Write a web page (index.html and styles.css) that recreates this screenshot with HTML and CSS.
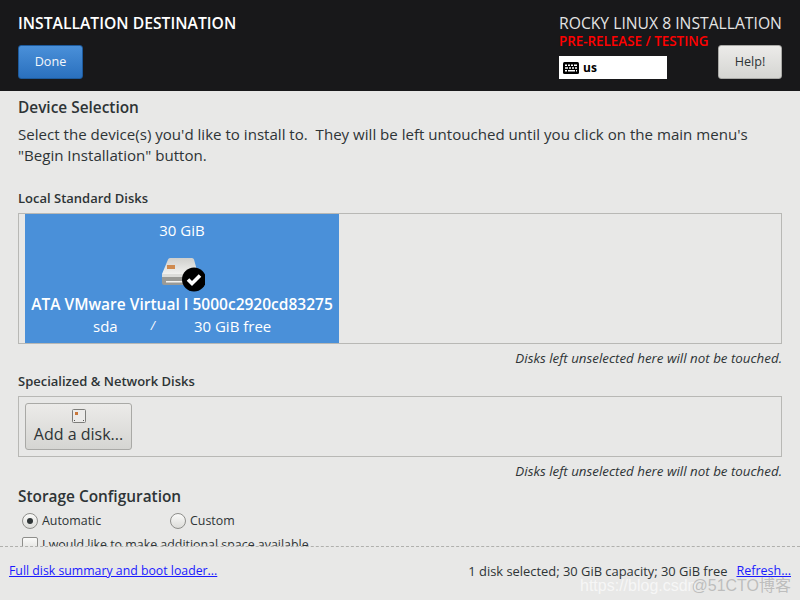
FILE: index.html
```html
<!DOCTYPE html>
<html lang="en">
<head>
    <meta charset="UTF-8">
    <title>Installation Destination</title>
    <link rel="stylesheet" href="styles.css">
</head>
<body>
    <div class="screen">
        <header class="top-bar">
            <div class="top-left">
                <div class="spoke-title">INSTALLATION DESTINATION</div>
                <button class="btn btn-done">Done</button>
            </div>
            <div class="top-right">
                <div class="distro-title">ROCKY LINUX 8 INSTALLATION</div>
                <div class="top-right-row">
                    <div class="top-right-col">
                        <div class="beta-label">PRE-RELEASE / TESTING</div>
                        <div class="layout-box">
                            <svg class="kbd-icon" width="16" height="12" viewBox="0 0 16 12">
                                <rect width="16" height="12" rx="1.5" fill="#000"/>
                                <path d="M2 2.5h2v1.5H2zM5 2.5h2v1.5H5zM8 2.5h2v1.5H8zM11 2.5h3v1.5h-3zM2 5.2h3v1.5H2zM6 5.2h2v1.5H6zM9 5.2h2v1.5H9zM12 5.2h2v1.5h-2zM2 8h2v1.5H2zM5 8h7v1.5H5zM13 8h1v1.5h-1z" fill="#fff"/>
                            </svg>
                            <span class="layout-name">us</span>
                        </div>
                    </div>
                    <button class="btn btn-help">Help!</button>
                </div>
            </div>
        </header>

        <main class="content">
            <h2 class="section-title">Device Selection</h2>
            <p class="intro">Select the device(s) you'd like to install to.&nbsp; They will be left untouched until you click on the main menu's<br>"Begin Installation" button.</p>

            <h3 class="group-label group-local">Local Standard Disks</h3>
            <div class="disk-box">
                <div class="disk-tile">
                    <div class="disk-size">30 GiB</div>
                    <svg class="disk-icon" width="46" height="40" viewBox="0 0 46 40">
                        <defs>
                            <linearGradient id="diskTop" x1="0" y1="0" x2="0" y2="1">
                                <stop offset="0" stop-color="#cfcfcc"/>
                                <stop offset="1" stop-color="#f1f1ef"/>
                            </linearGradient>
                        </defs>
                        <path d="M9 7.500Q9.500 6 11 6h22q1.500 0 2 1.500L39 22H3z" fill="url(#diskTop)"/>
                        <path d="M3 22h36v9q0 2-2 2H5q-2 0-2-2z" fill="#9a9a96"/>
                        <path d="M3 22h36v3H3z" fill="#dcdcd9"/>
                        <path d="M7 29h26v1.500H7z" fill="#f3f3f1"/>
                        <rect x="8" y="13" width="8" height="4" fill="#cf8a4f"/>
                        <circle cx="35" cy="27.500" r="12" fill="#000"/>
                        <path d="M29 27.500l4 4 8-8" fill="none" stroke="#fff" stroke-width="3.600"/>
                    </svg>
                    <div class="disk-name">ATA VMware Virtual I 5000c2920cd83275</div>
                    <div class="disk-meta">
                        <span class="disk-dev">sda</span>
                        <span class="disk-slash">/</span>
                        <span class="disk-free">30 GiB free</span>
                    </div>
                </div>
            </div>
            <div class="hint">Disks left unselected here will not be touched.</div>

            <h3 class="group-label group-special">Specialized &amp; Network Disks</h3>
            <div class="add-box">
                <button class="btn btn-add">
                    <svg class="add-icon" width="14" height="14" viewBox="0 0 14 14">
                        <rect x="0.500" y="0.500" width="13" height="13" rx="1" fill="#ecebe9" stroke="#7d7d7a"/>
                        <rect x="3" y="3" width="3" height="3" fill="#c9773a"/>
                        <rect x="2" y="11" width="1" height="1" fill="#555"/>
                        <rect x="11" y="11" width="1" height="1" fill="#555"/>
                    </svg>
                    <span>Add a disk...</span>
                </button>
            </div>
            <div class="hint">Disks left unselected here will not be touched.</div>

            <h2 class="section-title storage-title">Storage Configuration</h2>
            <div class="radio-row">
                <label class="radio-item radio-auto"><span class="radio radio-on"></span>Automatic</label>
                <label class="radio-item"><span class="radio"></span>Custom</label>
            </div>
            <label class="check-row"><span class="check"></span>I would like to make additional space available.</label>
        </main>

        <footer class="bottom-bar">
            <a class="link link-summary" href="#">Full disk summary and boot loader...</a>
            <div class="bottom-right">
                <span>1 disk selected; 30 GiB capacity; 30 GiB free</span>
                <a class="link" href="#">Refresh...</a>
            </div>
        </footer>

        <div class="watermark">https://blog.csdn<span class="wm-mark">@51CTO博客</span></div>
    </div>
</body>
</html>
```

FILE: styles.css
```css
/* Base */
* {
    margin: 0;
    padding: 0;
    box-sizing: border-box;
}

body {
    font-family: 'Open Sans', 'Noto Sans', sans-serif;
    background: #e8e8e7;
    color: #2e3436;
    overflow: hidden;
}

.screen {
    position: relative;
    width: 800px;
    height: 600px;
    display: flex;
    flex-direction: column;
    overflow: hidden;
}

/* Top bar */
.top-bar {
    height: 91px;
    flex-shrink: 0;
    background: #18181a;
    display: flex;
    justify-content: space-between;
    padding: 13px 18px 0;
}

.spoke-title {
    color: #fff;
    font-size: 15.700px;
    font-weight: 600;
    line-height: 20px;
    white-space: nowrap;
}

.btn {
    font-family: inherit;
    border-radius: 3px;
    border: 1px solid #a9a9a6;
    background: linear-gradient(#ecebe9, #d5d5d2);
    color: #2e3436;
}

.btn-done {
    display: block;
    margin-top: 12px;
    width: 65px;
    height: 34px;
    font-size: 12.600px;
    color: #f4f7fb;
    background: linear-gradient(#4a90d9, #2a70be);
    border-color: #1d5a9c;
    padding-bottom: 2px;
}

.top-right {
    width: 223px;
    display: flex;
    flex-direction: column;
}

.distro-title {
    color: #e4e4e4;
    font-size: 15.700px;
    line-height: 20px;
    white-space: nowrap;
}

.top-right-row {
    display: flex;
    justify-content: space-between;
}

.beta-label {
    margin-top: 1px;
    color: #ff0000;
    font-size: 13.400px;
    font-weight: 600;
    line-height: 15px;
    white-space: nowrap;
}

.layout-box {
    margin-top: 7px;
    width: 108px;
    height: 23px;
    background: #fff;
    display: flex;
    align-items: center;
    padding-left: 4px;
    color: #000;
}

.kbd-icon {
    flex-shrink: 0;
}

.layout-name {
    margin-left: 4px;
    font-size: 12px;
    font-weight: 700;
}

.btn-help {
    margin-top: 12px;
    width: 64px;
    height: 34px;
    font-size: 12.600px;
    padding-bottom: 2px;
}

/* Main content */
.content {
    height: 455px;
    flex-shrink: 0;
    overflow: hidden;
    padding: 7px 18px 0;
}

.section-title {
    font-size: 15.400px;
    font-weight: 600;
    line-height: 20px;
}

.intro {
    margin-top: 6px;
    font-size: 15.080px;
    line-height: 21px;
    white-space: nowrap;
}

.group-label {
    font-size: 13px;
    font-weight: 600;
    line-height: 16px;
}

.group-local {
    margin-top: 24px;
}

.disk-box {
    margin-top: 7px;
    height: 131px;
    border: 1px solid #b8b8b5;
    padding-left: 6px;
}

.disk-tile {
    width: 314px;
    height: 129px;
    background: #4a90d9;
    color: #fff;
    display: flex;
    flex-direction: column;
    align-items: center;
}

.disk-size {
    margin-top: 6px;
    font-size: 15px;
    line-height: 20px;
}

.disk-icon {
    margin-top: 12px;
    flex-shrink: 0;
}

.disk-name {
    margin-top: 2px;
    font-size: 15.500px;
    font-weight: 600;
    line-height: 20px;
    white-space: nowrap;
}

.disk-meta {
    margin-top: 2px;
    font-size: 15px;
    line-height: 20px;
    width: 100%;
    display: flex;
}

.disk-dev {
    margin-left: 68px;
}

.disk-slash {
    margin-left: 33px;
    font-style: italic;
    font-size: 12px;
}

.disk-free {
    margin-left: 39px;
}

.hint {
    margin-top: 6px;
    font-size: 13.350px;
    font-style: italic;
    line-height: 17px;
    text-align: right;
}

.group-special {
    margin-top: 6px;
}

.add-box {
    margin-top: 7px;
    height: 61px;
    border: 1px solid #b8b8b5;
    padding: 6px 6px;
}

.btn-add {
    width: 107px;
    height: 47px;
    font-size: 16px;
    display: flex;
    flex-direction: column;
    align-items: center;
    padding-top: 5px;
}

.btn-add span {
    margin-top: 1px;
    line-height: 20px;
}

.storage-title {
    margin-top: 7px;
}

.radio-row {
    margin-top: 4px;
    display: flex;
    padding-left: 4px;
}

.radio-item {
    display: flex;
    align-items: center;
    font-size: 12.400px;
    line-height: 20px;
}

.radio-auto {
    width: 148px;
}

.radio {
    width: 16px;
    height: 16px;
    margin-right: 4px;
    border-radius: 50%;
    border: 1px solid #8e8e8b;
    background: linear-gradient(#fafaf9, #dcdcd9);
    display: flex;
    align-items: center;
    justify-content: center;
}

.radio-on::after {
    content: "";
    width: 6px;
    height: 6px;
    border-radius: 50%;
    background: #2e3436;
}

.check-row {
    margin-top: 4px;
    padding-left: 4px;
    display: flex;
    align-items: center;
    font-size: 12.400px;
    line-height: 20px;
}

.check {
    width: 16px;
    height: 16px;
    margin-right: 4px;
    border-radius: 2px;
    border: 1px solid #8e8e8b;
    background: linear-gradient(#fafaf9, #dcdcd9);
}

/* Bottom bar */
.bottom-bar {
    flex-grow: 1;
    border-top: 1px dashed #b0b0ad;
    display: flex;
    justify-content: space-between;
    padding: 14px 9px 0;
    font-size: 12.900px;
    line-height: 20px;
}

.bottom-right {
    display: flex;
    gap: 9px;
}

.link {
    color: #1a1aff;
    font-size: 12.500px;
}

.link-summary {
    font-size: 12.300px;
}

/* Image watermark over the corner */
.watermark {
    position: absolute;
    left: 580px;
    top: 572px;
    color: rgba(255, 255, 255, 0.65);
    font-family: 'Liberation Sans', 'Noto Sans CJK SC', sans-serif;
    font-size: 16px;
    white-space: nowrap;
}

.wm-mark {
    margin-left: -5px;
    color: rgba(170, 170, 170, 0.7);
}
```
